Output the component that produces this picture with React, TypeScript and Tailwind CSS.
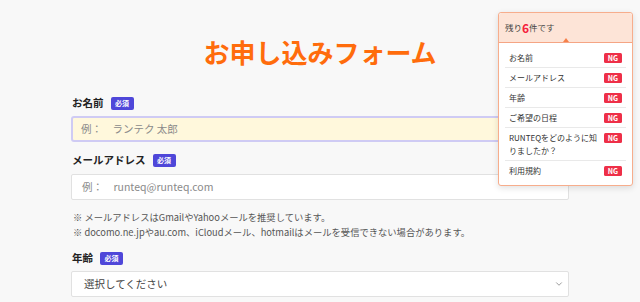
import React from "react";
import { ChevronDown } from "lucide-react";

const font = { fontFamily: '"Noto Sans CJK JP", "Noto Sans", sans-serif' };

const checks = [
  { label: "お名前" },
  { label: "メールアドレス" },
  { label: "年齢" },
  { label: "ご希望の日程" },
  { label: "RUNTEQをどのように知", label2: "りましたか？" },
  { label: "利用規約" },
];

const Required = () => (
  <span className="ml-[7px] inline-flex h-[13px] w-[23px] items-center justify-center rounded-[2px] bg-[#4f47d9] text-[7px] font-bold leading-none text-white">
    必須
  </span>
);

const Label = ({ children }: { children: React.ReactNode }) => (
  <div className="flex h-[16px] items-center pl-[1px] text-[10.5px] font-bold leading-[16px] text-[#222]">
    {children}
    <Required />
  </div>
);

const StatusPopup = () => (
  <div className="absolute left-[498px] top-[12px] w-[135px] rounded-[3px] border border-[#f7ad8c] bg-white shadow-[0_2px_6px_rgba(0,0,0,0.12)]">
    <div className="relative flex h-[30px] items-center rounded-t-[3px] border-b border-[#f5a584] bg-[#fde4d7] pl-[6px] text-[8.5px] text-[#444]">
      残り<span className="text-[12px] font-bold leading-none text-[#f5213b]">6</span>件です
      <span className="absolute bottom-0 left-[64px] h-0 w-0 border-x-[3.5px] border-b-[4px] border-x-transparent border-b-[#f5804a]" />
    </div>
    <div className="px-[6px] pb-[5px] pt-[5px]">
      {checks.map((c, i) => (
        <div
          key={c.label}
          className={`flex items-start justify-between py-[3px] pl-[4px] pr-[4px] ${i < checks.length - 1 ? "border-b border-[#e9e9e9]" : ""}`}
        >
          <div className="text-[8px] leading-[13px] text-[#333]">
            <div className="whitespace-nowrap">{c.label}</div>
            {c.label2 && <div className="whitespace-nowrap">{c.label2}</div>}
          </div>
          <span className="mt-[2px] flex h-[10px] w-[18px] items-center justify-center rounded-[1.5px] bg-[#ee2f48] text-[7px] font-bold leading-none text-white">
            NG
          </span>
        </div>
      ))}
    </div>
  </div>
);

export default function App() {
  return (
    <div className="relative h-[302px] w-[640px] overflow-hidden bg-[#f8f8f8]" style={font}>
      <div className="mx-auto w-[498px] pt-[34px]">
        <h1 className="text-center text-[26px] font-bold leading-[36px] text-[#ff6c0c]">お申し込みフォーム</h1>

        <div className="mt-[25px]">
          <Label>お名前</Label>
          <div className="mt-[5px] flex h-[26px] items-center rounded-[3px] border-2 border-[#cfcbf4] bg-[#fff8dc] px-[8px] text-[10.5px] text-[#8a8a8a]">
            例：　ランテク 太郎
          </div>
        </div>

        <div className="mt-[10px]">
          <Label>メールアドレス</Label>
          <div className="mt-[6px] flex h-[26px] items-center rounded-[2px] border border-[#e1e1e1] bg-white px-[10px] text-[10.5px] text-[#8a8a8a]">
            例：　runteq@runteq.com
          </div>
        </div>

        <div className="mt-[10px] pl-[2px] text-[9.3px] leading-[15px] text-[#555]">
          <p>※ メールアドレスはGmailやYahooメールを推奨しています。</p>
          <p>※ docomo.ne.jpやau.com、iCloudメール、hotmailはメールを受信できない場合があります。</p>
        </div>

        <div className="mt-[10px]">
          <Label>年齢</Label>
          <div className="mt-[5px] flex h-[26px] items-center justify-between rounded-[2px] border border-[#e1e1e1] bg-white pl-[12px] pr-[4px] text-[10.5px] text-[#444]">
            選択してください
            <ChevronDown size={10} strokeWidth={2} className="text-[#888]" />
          </div>
        </div>
      </div>

      <StatusPopup />
    </div>
  );
}
